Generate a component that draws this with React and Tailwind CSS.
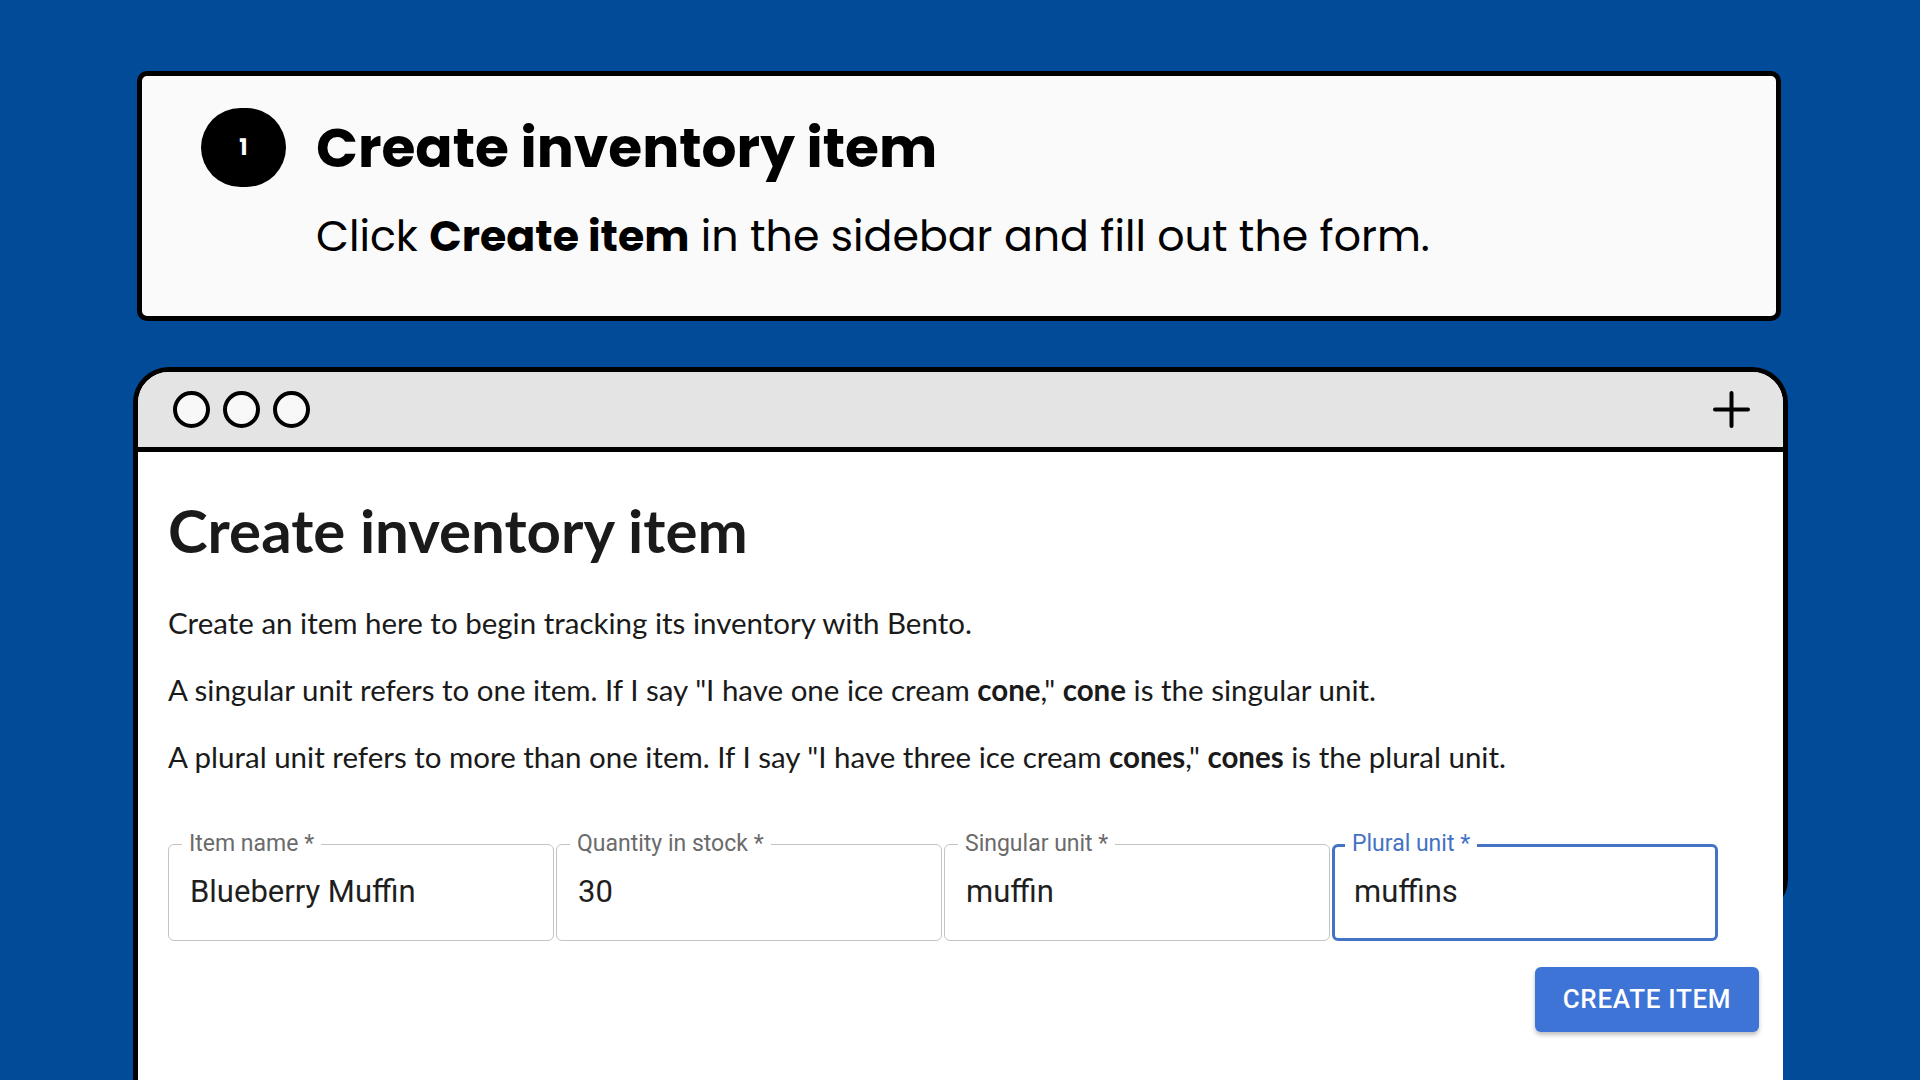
import React from 'react';

const fields = [
  { label: 'Item name *', value: 'Blueberry Muffin' },
  { label: 'Quantity in stock *', value: '30' },
  { label: 'Singular unit *', value: 'muffin' },
  { label: 'Plural unit *', value: 'muffins', focused: true },
];

const TextField = ({ label, value, focused }) => (
  <div
    className={`relative w-[386px] h-[97px] shrink-0 rounded-[6px] flex items-center ${
      focused ? 'border-[3px] border-[#4472c4] pl-[19px]' : 'border border-[#c4c4c4] pl-[21px]'
    }`}
  >
    <span
      className={`absolute bg-white px-[7px] text-[23px] leading-[28px] ${
        focused ? 'text-[#4472c4] left-[10px] top-[-17px]' : 'text-[#6b6b6b] left-[13px] top-[-15px]'
      }`}
    >
      {label}
    </span>
    <span className="text-[31px] text-[#1f1f1f]">{value}</span>
  </div>
);

const App = () => {
  return (
    <div className="w-[1920px] h-[1080px] overflow-hidden bg-[#024b99] flex flex-col">
      {/* step card */}
      <div className="ml-[137px] mt-[71px] w-[1644px] h-[250px] shrink-0 border-[5px] border-black rounded-[10px] bg-[#fafafa] pl-[59px] pt-[32px] font-['Poppins','Open_Sans',sans-serif] text-black">
        <div className="flex items-center">
          <div className="w-[85px] h-[79px] rounded-full bg-black text-white flex items-center justify-center text-[22px] font-bold">
            1
          </div>
          <h1 className="ml-[30px] text-[55px] leading-[56px] font-bold">Create inventory item</h1>
        </div>
        <p className="ml-[115px] mt-[19px] text-[42.7px] leading-[60px]">
          Click <b className="font-bold">Create item</b> in the sidebar and fill out the form.
        </p>
      </div>

      {/* browser window */}
      <div className="ml-[133px] mt-[46px] w-[1655px] h-[548px] shrink-0 border-[5px] border-black rounded-[36px] bg-white">
        <div className="h-[80px] rounded-t-[31px] bg-[#e4e4e4] border-b-[5px] border-black flex items-center justify-between pl-[35px] pr-[33px]">
          <div className="flex gap-[13px]">
            <div className="w-[37px] h-[37px] rounded-full border-[4px] border-black bg-[#f8f8f8]" />
            <div className="w-[37px] h-[37px] rounded-full border-[4px] border-black bg-[#f8f8f8]" />
            <div className="w-[37px] h-[37px] rounded-full border-[4px] border-black bg-[#f8f8f8]" />
          </div>
          <svg width="37" height="37" viewBox="0 0 37 37" fill="none" stroke="black" strokeWidth="4" strokeLinecap="round">
            <path d="M18.5 2v33M2 18.5h33" />
          </svg>
        </div>

        <div className="-ml-[5px] w-[1650px] h-[700px] border-l-[5px] border-black bg-white pl-[30px] pr-[24px] pt-[43px] font-['Lato',sans-serif] text-[#1a1a1a]">
          <h2 className="text-[60px] leading-[70px] font-bold">Create inventory item</h2>
          <div className="mt-[41px] flex flex-col gap-[33px] text-[29.5px] leading-[34px]">
            <p>Create an item here to begin tracking its inventory with Bento.</p>
            <p>
              A singular unit refers to one item. If I say "I have one ice cream <b>cone</b>," <b>cone</b> is the singular unit.
            </p>
            <p>
              A plural unit refers to more than one item. If I say "I have three ice cream <b>cones</b>," <b>cones</b> is the plural unit.
            </p>
          </div>

          <div className="mt-[70px] flex gap-[2px] font-['Roboto',sans-serif]">
            {fields.map(f => (
              <TextField key={f.label} {...f} />
            ))}
          </div>

          <div className="mt-[26px] flex justify-end">
            <button className="w-[224px] h-[65px] rounded-[6px] bg-[#3d74d6] text-white font-['Roboto',sans-serif] font-medium text-[26px] tracking-[0.7px] shadow-[0_3px_4px_rgba(0,0,0,0.25)]">
              CREATE ITEM
            </button>
          </div>
        </div>
      </div>
    </div>
  );
};

export default App;
